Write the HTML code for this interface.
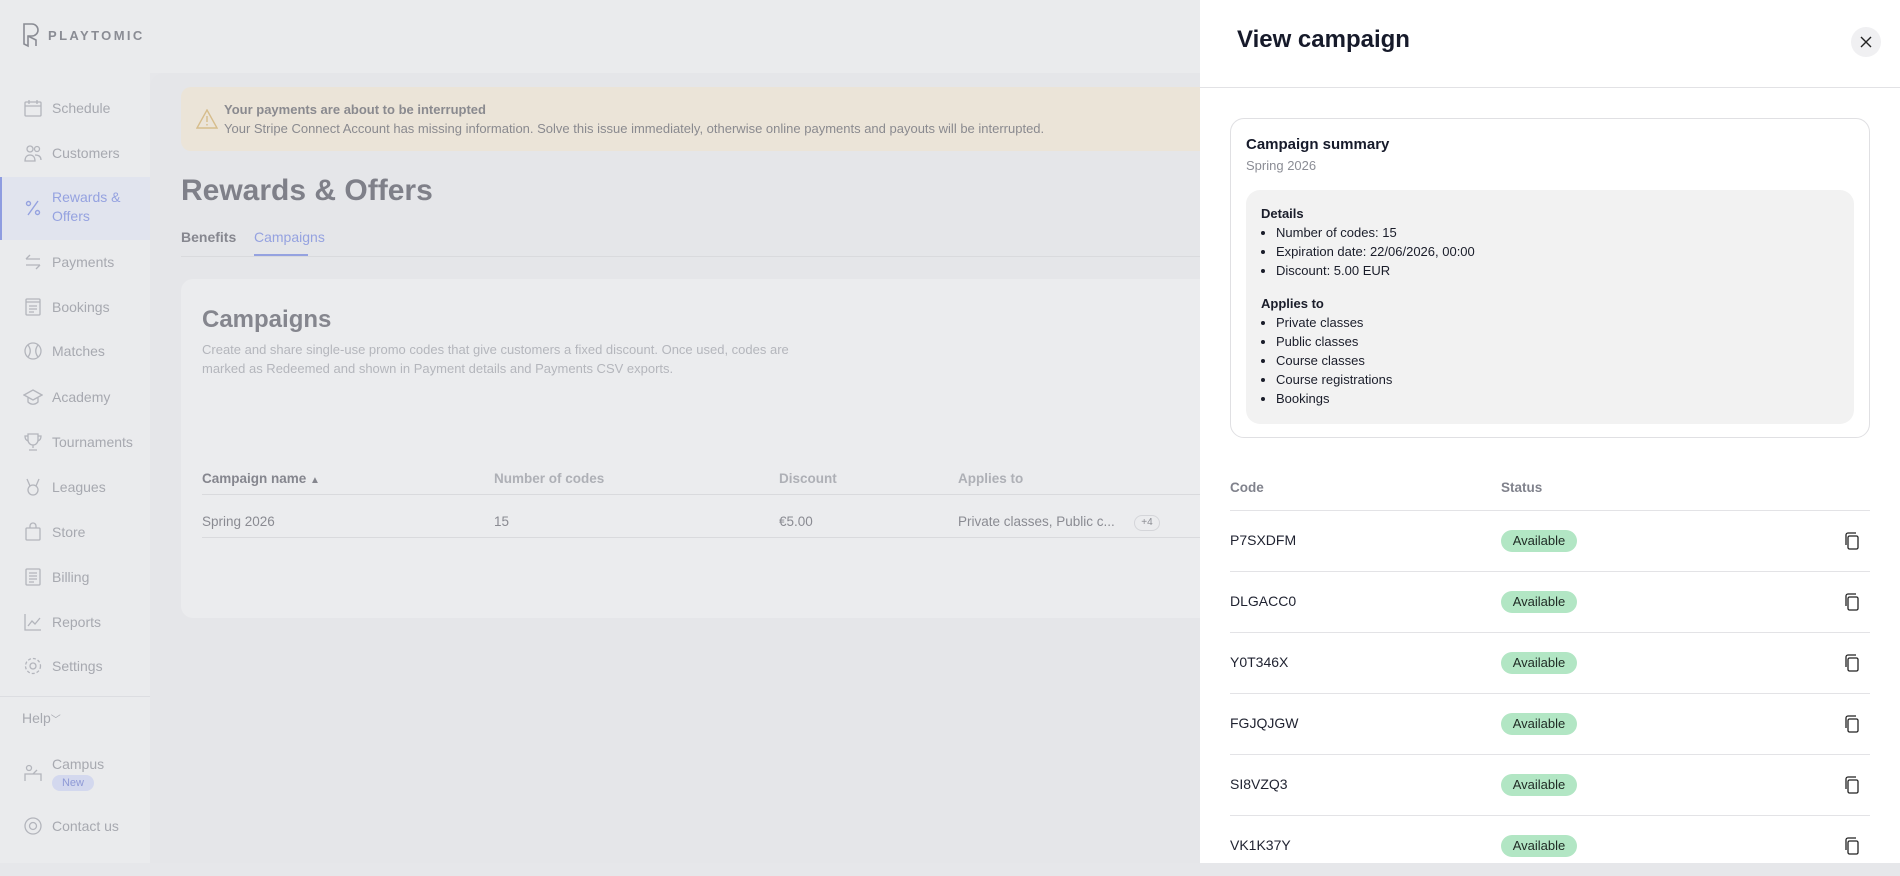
<!DOCTYPE html>
<html><head><meta charset="utf-8"><style>
*{box-sizing:border-box;margin:0;padding:0}
body{width:1900px;height:863px;overflow:hidden;font-family:"Liberation Sans",Arial,sans-serif;background:#e6e7ea;position:relative}
.side{position:absolute;left:0;top:0;width:150px;height:863px;background:#eaebed;z-index:2}
.top{position:absolute;left:150px;top:0;right:0;height:73px;background:#eaebed}
.logo{position:absolute;left:22px;top:22px;display:flex;align-items:center;gap:8px;color:#8a8c94;font-size:13px;letter-spacing:2.4px;font-weight:bold;white-space:nowrap}
.nav{position:absolute;left:0;width:150px;display:flex;align-items:center;color:#a7a9b0;font-size:14px}
.nav svg{position:absolute;left:23px}
.nav span{position:absolute;left:52px;line-height:19px}
.main{position:absolute;left:150px;top:73px;right:0;bottom:0;background:#e5e6e9;border-top-left-radius:14px}
.panel{position:absolute;left:1200px;top:0;width:700px;height:863px;background:#fff}
ul{list-style:disc;padding-left:15px}
li{line-height:19px}
.row{position:absolute;left:1230px;width:640px;height:61px;border-top:1px solid #e3e3e6;font-size:14px;color:#1f2230}
.row .c{position:absolute;left:0;top:21px}
.badge{position:absolute;left:271px;top:19px;width:76px;height:22px;border-radius:11px;background:#b2e6c4;font-size:13px;text-align:center;line-height:22px;color:#1f2a24}
.row svg{position:absolute;left:613px;top:20px}
</style></head><body>
<div class="side">
 <div class="logo"><svg width="18" height="26" viewBox="0 0 18 26" fill="none" stroke="#8a8c94" stroke-width="1.6"><path d="M2 2h8a6 6 0 0 1 0 12H6v10l-4-2z"/><path d="M6 14l8 4v6"/></svg>PLAYTOMIC</div>
 <div class="nav" style="top:97px;height:22px"><svg width="20" height="20" viewBox="0 0 20 20" fill="none" stroke="#b3b5bc" stroke-width="1.3"><rect x="2" y="4" width="16" height="14" rx="1"/><path d="M2 8h16M6 2v4M14 2v4"/></svg><span>Schedule</span></div>
 <div class="nav" style="top:142px;height:22px"><svg width="20" height="20" viewBox="0 0 20 20" fill="none" stroke="#b3b5bc" stroke-width="1.3"><circle cx="7" cy="6" r="3"/><circle cx="14" cy="6" r="2.5"/><path d="M2 18c0-4 2-6 5-6s5 2 5 6zM12 12c3 0 6 1 6 5"/></svg><span>Customers</span></div>
 <div style="position:absolute;left:0;top:177px;width:150px;height:63px;background:#e1e4ee;border-left:2px solid #8e9ce0"></div>
 <div class="nav" style="top:197px;height:22px"><svg width="20" height="20" viewBox="0 0 20 20" fill="none" stroke="#95a2e0" stroke-width="1.4"><path d="M15 3L5 17"/><circle cx="5.5" cy="5.5" r="2"/><circle cx="14.5" cy="14.5" r="2"/></svg><span style="color:#95a2e0;top:-9px">Rewards &amp;<br>Offers</span></div>
 <div class="nav" style="top:251px;height:22px"><svg width="20" height="20" viewBox="0 0 20 20" fill="none" stroke="#b3b5bc" stroke-width="1.3"><path d="M3 7h14M3 7l4-4M17 13H3M17 13l-4 4"/></svg><span>Payments</span></div>
 <div class="nav" style="top:296px;height:22px"><svg width="20" height="20" viewBox="0 0 20 20" fill="none" stroke="#b3b5bc" stroke-width="1.3"><rect x="3" y="2" width="14" height="16" rx="1"/><path d="M3 5h14M6 9h8M6 12h8M6 15h5"/></svg><span>Bookings</span></div>
 <div class="nav" style="top:340px;height:22px"><svg width="20" height="20" viewBox="0 0 20 20" fill="none" stroke="#b3b5bc" stroke-width="1.3"><circle cx="10" cy="10" r="8"/><path d="M5 4c3 4 3 8 0 12M15 4c-3 4-3 8 0 12"/></svg><span>Matches</span></div>
 <div class="nav" style="top:386px;height:22px"><svg width="20" height="20" viewBox="0 0 20 20" fill="none" stroke="#b3b5bc" stroke-width="1.3"><path d="M1 8l9-5 9 5-9 5zM5 10v5c3 3 7 3 10 0v-5"/></svg><span>Academy</span></div>
 <div class="nav" style="top:431px;height:22px"><svg width="20" height="20" viewBox="0 0 20 20" fill="none" stroke="#b3b5bc" stroke-width="1.3"><path d="M5 2h10v6a5 5 0 0 1-10 0zM5 4H2c0 3 1 4 3 5M15 4h3c0 3-1 4-3 5M10 13v3M6 18h8"/></svg><span>Tournaments</span></div>
 <div class="nav" style="top:476px;height:22px"><svg width="20" height="20" viewBox="0 0 20 20" fill="none" stroke="#b3b5bc" stroke-width="1.3"><path d="M4 2l3 7M16 2l-3 7"/><circle cx="10" cy="13" r="5"/></svg><span>Leagues</span></div>
 <div class="nav" style="top:521px;height:22px"><svg width="20" height="20" viewBox="0 0 20 20" fill="none" stroke="#b3b5bc" stroke-width="1.3"><rect x="3" y="6" width="14" height="12" rx="1"/><path d="M7 6V4a3 3 0 0 1 6 0v2"/></svg><span>Store</span></div>
 <div class="nav" style="top:566px;height:22px"><svg width="20" height="20" viewBox="0 0 20 20" fill="none" stroke="#b3b5bc" stroke-width="1.3"><rect x="3" y="2" width="14" height="16" rx="1"/><path d="M6 6h8M6 9h8M6 12h8M6 15h5"/></svg><span>Billing</span></div>
 <div class="nav" style="top:611px;height:22px"><svg width="20" height="20" viewBox="0 0 20 20" fill="none" stroke="#b3b5bc" stroke-width="1.3"><path d="M2 2v16h16M5 14l4-5 3 3 5-6"/></svg><span>Reports</span></div>
 <div class="nav" style="top:655px;height:22px"><svg width="20" height="20" viewBox="0 0 20 20" fill="none" stroke="#b3b5bc" stroke-width="1.3"><circle cx="10" cy="10" r="3"/><circle cx="10" cy="10" r="7.5" stroke-dasharray="3 2"/></svg><span>Settings</span></div>
 <div style="position:absolute;left:0;top:696px;width:150px;border-top:1px solid #dcdde1"></div>
 <div style="position:absolute;left:22px;top:710px;color:#a7a9b0;font-size:14px">Help<span style="font-size:10px">﹀</span></div>
 <div class="nav" style="top:762px;height:22px"><svg width="20" height="20" viewBox="0 0 20 20" fill="none" stroke="#b3b5bc" stroke-width="1.3"><circle cx="6" cy="5" r="2.5"/><path d="M2 18v-7h8l4-4M10 11h8v7"/></svg><span style="top:-7px">Campus</span></div>
 <div style="position:absolute;left:52px;top:775px;width:42px;height:16px;border-radius:8px;background:#d3d8ee;color:#8f9ad6;font-size:11px;text-align:center;line-height:16px">New</div>
 <div class="nav" style="top:815px;height:22px"><svg width="20" height="20" viewBox="0 0 20 20" fill="none" stroke="#b3b5bc" stroke-width="1.3"><circle cx="10" cy="10" r="8"/><circle cx="10" cy="10" r="3.5"/></svg><span>Contact us</span></div>
</div>
<div class="top"></div>
<div class="main">
 <div style="position:absolute;left:31px;top:14px;width:1100px;height:64px;background:#ebe4d8;border-radius:10px">
  <svg style="position:absolute;left:15px;top:22px" width="22" height="20" viewBox="0 0 22 20" fill="none" stroke="#d6bd8c" stroke-width="1.4"><path d="M11 1L21 19H1z"/><path d="M11 7v6M11 15v1.5"/></svg>
  <div style="position:absolute;left:43px;top:15px;font-size:13px;color:#8a8a8f;font-weight:bold">Your payments are about to be interrupted</div>
  <div style="position:absolute;left:43px;top:34px;font-size:13px;color:#8a8a8f">Your Stripe Connect Account has missing information. Solve this issue immediately, otherwise online payments and payouts will be interrupted.</div>
 </div>
 <div style="position:absolute;left:31px;top:101px;font-size:30px;font-weight:bold;color:#7f8089">Rewards &amp; Offers</div>
 <div style="position:absolute;left:31px;top:156px;font-size:14px;color:#86878f;font-weight:bold">Benefits</div>
 <div style="position:absolute;left:104px;top:156px;font-size:14px;color:#95a2e0">Campaigns</div>
 <div style="position:absolute;left:31px;top:183px;width:1100px;border-top:1px solid #d9dadd"></div>
 <div style="position:absolute;left:104px;top:181px;width:54px;border-top:2px solid #95a2e0"></div>
 <div style="position:absolute;left:31px;top:206px;width:1100px;height:339px;background:#ebecee;border-radius:12px">
  <div style="position:absolute;left:21px;top:27px;font-size:24px;font-weight:bold;color:#85868e">Campaigns</div>
  <div style="position:absolute;left:21px;top:61px;font-size:13px;color:#b4b6bc;line-height:19px;width:620px">Create and share single-use promo codes that give customers a fixed discount. Once used, codes are marked as Redeemed and shown in Payment details and Payments CSV exports.</div>
  <div style="position:absolute;left:21px;top:192px;font-size:13.5px;color:#85868e;font-weight:bold">Campaign name <span style="font-size:10px">▲</span></div>
  <div style="position:absolute;left:313px;top:192px;font-size:13.5px;color:#aeb0b6;font-weight:bold">Number of codes</div>
  <div style="position:absolute;left:598px;top:192px;font-size:13.5px;color:#aeb0b6;font-weight:bold">Discount</div>
  <div style="position:absolute;left:777px;top:192px;font-size:13.5px;color:#aeb0b6;font-weight:bold">Applies to</div>
  <div style="position:absolute;left:21px;top:215px;width:1079px;border-top:1px solid #d9dadd"></div>
  <div style="position:absolute;left:21px;top:235px;font-size:13.5px;color:#8a8b92">Spring 2026</div>
  <div style="position:absolute;left:313px;top:235px;font-size:13.5px;color:#8a8b92">15</div>
  <div style="position:absolute;left:598px;top:235px;font-size:13.5px;color:#8a8b92">€5.00</div>
  <div style="position:absolute;left:777px;top:235px;font-size:13.5px;color:#8a8b92">Private classes, Public c...</div>
  <div style="position:absolute;left:953px;top:236px;width:26px;height:16px;border:1px solid #d4d5d9;border-radius:8px;font-size:10px;color:#8a8b92;text-align:center;line-height:14px">+4</div>
  <div style="position:absolute;left:21px;top:258px;width:1079px;border-top:1px solid #d9dadd"></div>
 </div>
</div>
<div class="panel">
 <div style="position:absolute;left:37px;top:26px;font-size:24px;font-weight:bold;color:#161a2a">View campaign</div>
 <div style="position:absolute;left:651px;top:27px;width:30px;height:30px;border-radius:15px;background:#f0f0f2"><svg style="position:absolute;left:9px;top:9px" width="12" height="12" viewBox="0 0 12 12" stroke="#222" stroke-width="1.4"><path d="M1 1l10 10M11 1L1 11"/></svg></div>
 <div style="position:absolute;left:0;top:87px;width:700px;border-top:1px solid #e2e2e5"></div>
 <div style="position:absolute;left:30px;top:118px;width:640px;height:320px;border:1px solid #e0e0e3;border-radius:14px">
  <div style="position:absolute;left:15px;top:17px;font-size:15px;font-weight:bold;color:#161a2a">Campaign summary</div>
  <div style="position:absolute;left:15px;top:39px;font-size:13px;color:#8b8d95">Spring 2026</div>
  <div style="position:absolute;left:15px;top:71px;width:608px;height:234px;background:#f2f2f2;border-radius:14px;padding:14px 15px;font-size:13px;color:#1a1d2a">
   <div style="font-weight:bold;line-height:19px">Details</div>
   <ul><li>Number of codes: 15</li><li>Expiration date: 22/06/2026, 00:00</li><li>Discount: 5.00 EUR</li></ul>
   <div style="font-weight:bold;line-height:19px;margin-top:14px">Applies to</div>
   <ul><li>Private classes</li><li>Public classes</li><li>Course classes</li><li>Course registrations</li><li>Bookings</li></ul>
  </div>
 </div>
</div>
<div style="position:absolute;left:1230px;top:480px;font-size:13.5px;color:#80828c;font-weight:bold">Code</div>
<div style="position:absolute;left:1501px;top:480px;font-size:13.5px;color:#80828c;font-weight:bold">Status</div>
<div class="row" style="top:510px"><div class="c">P7SXDFM</div><div class="badge">Available</div><svg width="18" height="20" viewBox="0 0 18 20" fill="none" stroke="#222" stroke-width="1.3"><rect x="5" y="5" width="10" height="13" rx="1.5"/><path d="M3 14V4a2 2 0 0 1 2-2h8"/></svg></div>
<div class="row" style="top:571px"><div class="c">DLGACC0</div><div class="badge">Available</div><svg width="18" height="20" viewBox="0 0 18 20" fill="none" stroke="#222" stroke-width="1.3"><rect x="5" y="5" width="10" height="13" rx="1.5"/><path d="M3 14V4a2 2 0 0 1 2-2h8"/></svg></div>
<div class="row" style="top:632px"><div class="c">Y0T346X</div><div class="badge">Available</div><svg width="18" height="20" viewBox="0 0 18 20" fill="none" stroke="#222" stroke-width="1.3"><rect x="5" y="5" width="10" height="13" rx="1.5"/><path d="M3 14V4a2 2 0 0 1 2-2h8"/></svg></div>
<div class="row" style="top:693px"><div class="c">FGJQJGW</div><div class="badge">Available</div><svg width="18" height="20" viewBox="0 0 18 20" fill="none" stroke="#222" stroke-width="1.3"><rect x="5" y="5" width="10" height="13" rx="1.5"/><path d="M3 14V4a2 2 0 0 1 2-2h8"/></svg></div>
<div class="row" style="top:754px"><div class="c">SI8VZQ3</div><div class="badge">Available</div><svg width="18" height="20" viewBox="0 0 18 20" fill="none" stroke="#222" stroke-width="1.3"><rect x="5" y="5" width="10" height="13" rx="1.5"/><path d="M3 14V4a2 2 0 0 1 2-2h8"/></svg></div>
<div class="row" style="top:815px"><div class="c">VK1K37Y</div><div class="badge">Available</div><svg width="18" height="20" viewBox="0 0 18 20" fill="none" stroke="#222" stroke-width="1.3"><rect x="5" y="5" width="10" height="13" rx="1.5"/><path d="M3 14V4a2 2 0 0 1 2-2h8"/></svg></div>
</body></html>
